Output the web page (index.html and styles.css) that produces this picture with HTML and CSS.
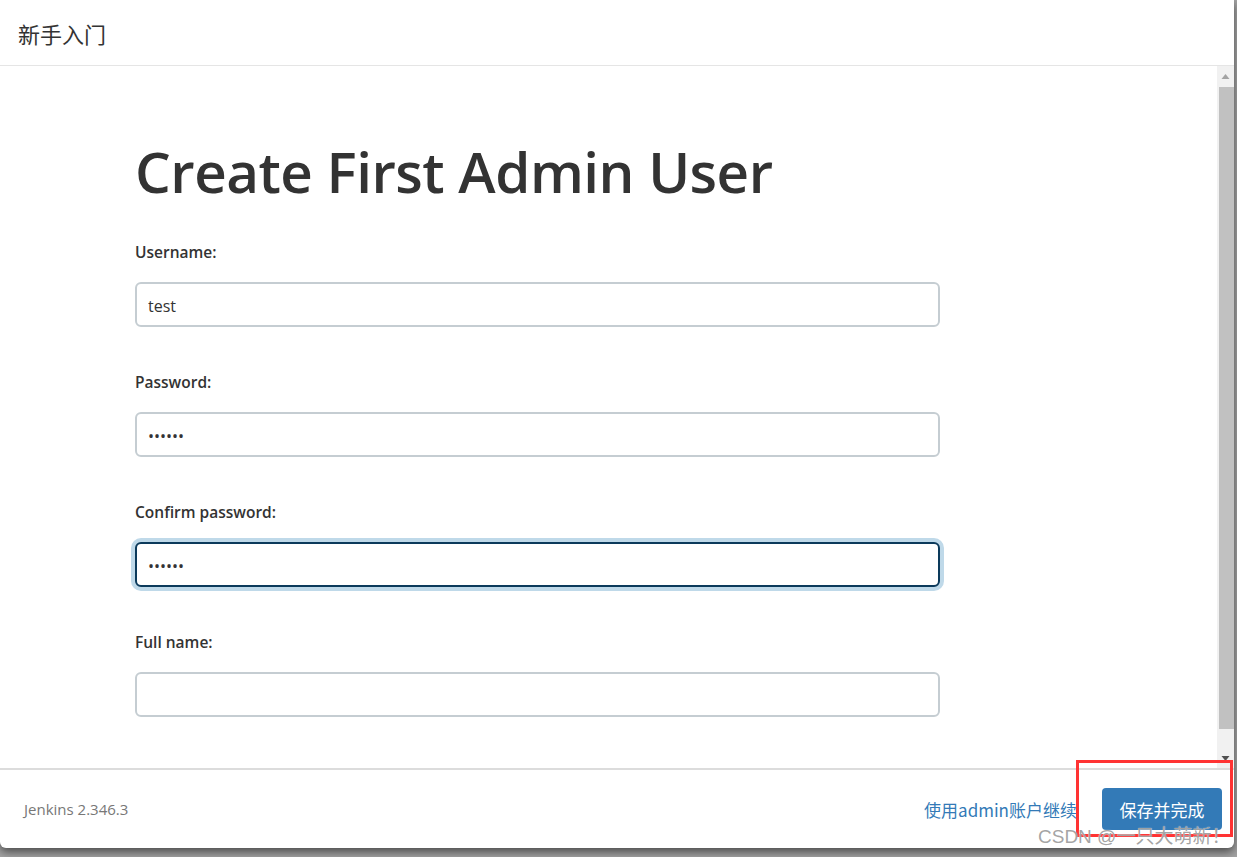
FILE: index.html
```html
<!DOCTYPE html>
<html>
<head>
    <title>新手入门</title>
    <link rel="stylesheet" href="styles.css">
</head>
<body>
    <div class="setup-dialog">
        <div class="dialog-header">
            <h4>新手入门</h4>
        </div>

        <div class="dialog-body">
            <form class="admin-form" name="createAdmin" method="post">
                <h1>Create First Admin User</h1>

                <label for="username">Username:</label>
                <input type="text" id="username" name="username" value="test">

                <label for="password1">Password:</label>
                <input type="password" id="password1" name="password1" value="123456">

                <label for="password2">Confirm password:</label>
                <input class="focused" type="password" id="password2" name="password2" value="123456">

                <label for="fullname">Full name:</label>
                <input type="text" id="fullname" name="fullname">
            </form>

            <!-- classic scrollbar, drawn since the headless browser hides real ones -->
            <div class="scrollbar">
                <div class="scroll-button">
                    <svg width="17" height="17" viewBox="0 0 17 17"><path d="M4.5 11h8l-4-5z" fill="#a3a3a3"/></svg>
                </div>
                <div class="scroll-track">
                    <div class="scroll-thumb"></div>
                </div>
                <div class="scroll-button">
                    <svg width="17" height="17" viewBox="0 0 17 17"><path d="M4.5 6h8l-4 5z" fill="#505050"/></svg>
                </div>
            </div>
        </div>

        <div class="dialog-footer">
            <span class="version">Jenkins 2.346.3</span>
            <div class="actions">
                <a href="#" class="skip-link">使用admin账户继续</a>
                <button class="save-button" type="button">保存并完成</button>
            </div>
        </div>
    </div>

    <!-- screenshot annotations -->
    <div class="highlight-box"></div>
    <div class="watermark">CSDN @一只大萌新！</div>
</body>
</html>
```

FILE: styles.css
```css
html, body {
    margin: 0;
    height: 100%;
}

body {
    font-family: "Open Sans", "Noto Sans CJK SC", sans-serif;
    background-color: #a4a4a4; /* grey backdrop behind the modal */
    color: #333;
    overflow: hidden;
}

.setup-dialog {
    width: 1234px;
    height: 848px;
    background-color: #fff;
    border-radius: 0 0 6px 6px;
    box-shadow: 0 4px 10px rgba(0, 0, 0, 0.55);
    display: flex;
    flex-direction: column;
}

.dialog-header {
    height: 65px;
    border-bottom: 1px solid #e5e5e5;
    display: flex;
    align-items: center;
    padding-left: 18px;
}

.dialog-header h4 {
    margin: 0;
    font-family: "Noto Sans CJK SC", sans-serif;
    font-size: 22px;
    font-weight: 400;
    color: #333;
}

.dialog-body {
    flex: 1;
    display: flex;
    overflow: hidden;
}

.admin-form {
    flex: 1;
    padding-left: 135px;
    padding-top: 66px;
}

.admin-form h1 {
    font-size: 56.5px;
    font-weight: 600;
    color: #333;
    margin: 0 0 29px 0;
    line-height: 80px;
    letter-spacing: -0.5px;
}

.admin-form label {
    display: block;
    font-size: 15.5px;
    font-weight: 600;
    line-height: 23px;
    margin-bottom: 18px;
    color: #333;
}

.admin-form input {
    display: block;
    box-sizing: border-box;
    width: 805px;
    height: 45px;
    margin: 0 0 44px 0;
    padding: 2px 11px 0 11px;
    font-family: "Open Sans", sans-serif;
    font-size: 16px;
    color: #333;
    border: 2px solid #c5cdd2;
    border-radius: 6px;
    background-color: #fff;
    outline: none;
}

.admin-form input.focused {
    border-color: #0c3a5b;
    box-shadow: 0 0 0 4px #bfd9e9;
}

.scrollbar {
    width: 17px;
    background-color: #f1f1f1;
    display: flex;
    flex-direction: column;
}

.scroll-button {
    height: 20px;
    display: flex;
    align-items: center;
    justify-content: center;
}

.scroll-track {
    flex: 1;
    padding: 1px 0 19px 2px;
    display: flex;
}

.scroll-thumb {
    flex: 1;
    background-color: #c1c1c1;
}

.dialog-footer {
    height: 78px;
    border-top: 2px solid #dcdcdc;
    display: flex;
    align-items: center;
    justify-content: space-between;
    padding: 0 12px 0 24px;
}

.version {
    font-size: 15px;
    color: #777;
}

.actions {
    display: flex;
    align-items: center;
}

.skip-link {
    font-family: "Noto Sans CJK SC", sans-serif;
    font-size: 17px;
    color: #337ab7;
    text-decoration: none;
}

.save-button {
    margin-left: 25px;
    width: 120px;
    height: 42px;
    background-color: #337ab7;
    border: none;
    border-radius: 4px;
    color: #fff;
    font-family: "Noto Sans CJK SC", sans-serif;
    font-size: 17px;
    cursor: pointer;
}

.highlight-box {
    position: absolute;
    left: 1076px;
    top: 760px;
    width: 151px;
    height: 71px;
    border: 3px solid #ff3333;
}

.watermark {
    position: absolute;
    left: 1038px;
    top: 826px;
    white-space: nowrap;
    font-family: "Liberation Sans", "Noto Sans CJK SC", sans-serif;
    font-size: 19px;
    line-height: 22px;
    color: rgba(140, 140, 140, 0.8);
    text-shadow: 0 0 1px #fff;
}
```
